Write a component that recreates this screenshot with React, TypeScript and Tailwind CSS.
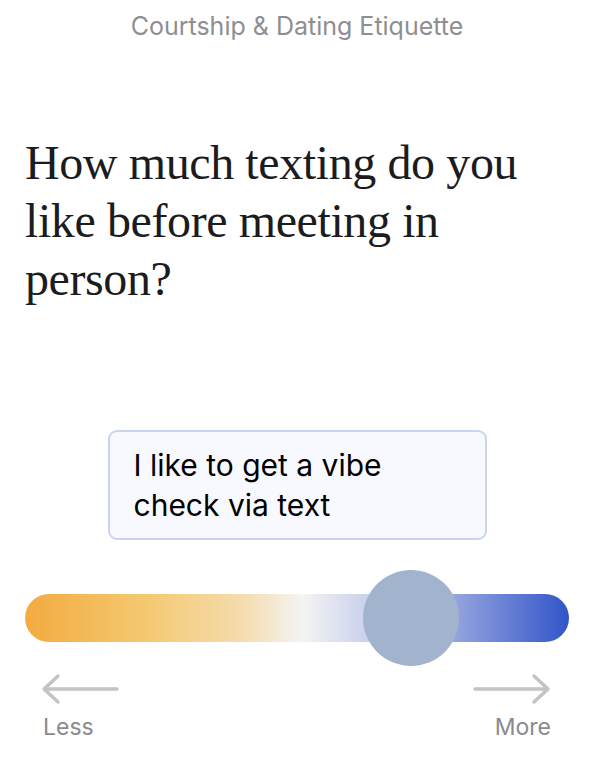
const SANS = "font-['Inter','Liberation_Sans',sans-serif]";

function Arrow({ dir }: { dir: "left" | "right" }) {
  const d = dir === "left" ? "M3 16H76M17 3L3 16L17 29" : "M2 16H75M61 3L75 16L61 29";
  return (
    <svg width="78" height="32" viewBox="0 0 78 32" fill="none">
      <path d={d} stroke="#c4c4c4" strokeWidth="3.5" strokeLinecap="round" strokeLinejoin="round" />
    </svg>
  );
}

export default function App() {
  const value = 0.71;

  return (
    <div className={`flex h-[772px] w-[594px] flex-col bg-white ${SANS}`}>
      <header className="pt-[10px] text-center text-[25px] leading-[32px] text-[#8e8e93]">
        Courtship &amp; Dating Etiquette
      </header>

      <h1 className="mt-[92px] px-[25px] font-['Liberation_Serif','DejaVu_Serif',serif] text-[48px] leading-[58px] tracking-[-0.4px] text-[#1c1c1e]">
        How much texting do you like before meeting in person?
      </h1>

      <div className="mt-[122px] flex justify-center">
        <div className="w-[379px] rounded-[9px] border-2 border-[#cbd4ef] bg-[#f8f9ff] px-[24px] py-[13px] text-[30px] leading-[40px] text-black">
          I like to get a vibe check via text
        </div>
      </div>

      <div className="mt-[30px] px-[25px]">
        <div className="relative h-[96px]">
          <div className="absolute inset-x-0 top-[24px] h-[48px] rounded-full bg-[linear-gradient(90deg,#f3ab40_0%,#f4c870_22%,#f5dcae_40%,#f4f4f4_51%,#ccd3ec_62%,#9aa8e0_78%,#3154c8_100%)]" />
          <div
            className="absolute top-0 h-[96px] w-[96px] -translate-x-1/2 rounded-full bg-[#a2b3ce]"
            style={{ left: `${value * 100}%` }}
          />
        </div>
      </div>

      <div className="mt-[7px] flex justify-between pl-[41px] pr-[43px]">
        <div className="flex flex-col items-start">
          <Arrow dir="left" />
          <span className="mt-[8px] pl-[2px] text-[23px] leading-[28px] text-[#8a8a8e]">Less</span>
        </div>
        <div className="flex flex-col items-end">
          <Arrow dir="right" />
          <span className="mt-[8px] text-[23px] leading-[28px] text-[#8a8a8e]">More</span>
        </div>
      </div>
    </div>
  );
}
